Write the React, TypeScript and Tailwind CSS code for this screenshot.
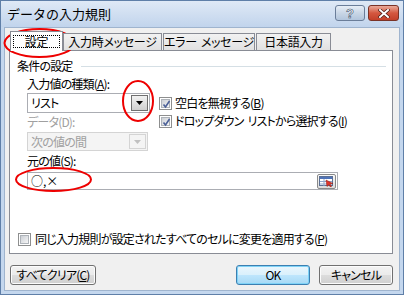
import React from "react";

const font = { fontFamily: '"Noto Sans CJK JP", "Liberation Sans", sans-serif' };

function Check({ checked }: { checked: boolean }) {
  return (
    <div className="w-[13px] h-[13px] border border-[#8e8f8f] bg-white p-[1px] shrink-0">
      <div className="w-full h-full bg-gradient-to-br from-[#cbcfd5] to-[#f6f6f6] border border-[#aeb3b9] relative">
        {checked && (
          <svg width="9" height="9" viewBox="0 0 9 9" className="absolute left-0 top-0">
            <path d="M1.5 4.5 L3.5 7 L7.5 1" stroke="#4a5f97" strokeWidth="1.6" fill="none" />
          </svg>
        )}
      </div>
    </div>
  );
}

function DropBtn({ disabled }: { disabled?: boolean }) {
  return (
    <div
      className={
        "w-[17px] h-full border flex items-center justify-center " +
        (disabled
          ? "border-[#d4d4d4] bg-[#f4f4f4]"
          : "border-[#707070] bg-gradient-to-b from-[#f2f2f2] to-[#cfcfcf]")
      }
    >
      <svg width="7" height="4" viewBox="0 0 7 4">
        <path d="M0 0 H7 L3.5 4 Z" fill={disabled ? "#c0c0c0" : "#000"} />
      </svg>
    </div>
  );
}

function Btn({ children, w, def }: { children: React.ReactNode; w: string; def?: boolean }) {
  return (
    <div
      className={
        "h-[20px] rounded-[3px] border flex items-center justify-center text-[12px] text-black whitespace-nowrap " +
        w +
        (def ? " border-[#3c7fb1] shadow-[inset_0_0_0_1px_#7fd3f7]" : " border-[#707070] shadow-[inset_0_0_0_1px_#fcfcfc]")
      }
      style={{
        background: def
          ? "linear-gradient(to bottom,#eaf6fd 0%,#d9f0fc 50%,#bee6fd 50%,#a7d9f5 100%)"
          : "linear-gradient(to bottom,#f2f2f2 0%,#ebebeb 50%,#dddddd 50%,#cfcfcf 100%)",
      }}
    >
      {children}
    </div>
  );
}

export default function App() {
  return (
    <div
      className="relative w-[404px] h-[295px] border border-[#5f7fa8] bg-[#c4d7ee] flex flex-col text-[12px] leading-[14px] text-black tracking-[-0.8px] [font-feature-settings:'palt']"
      style={font}
    >
      {/* title bar */}
      <div className="h-[26px] flex items-center pl-[6px] pr-[4px] bg-gradient-to-b from-[#dfe9f6] to-[#c1d4ec]">
        <div className="text-[13px] text-black flex-1 pb-[1px] tracking-normal [font-feature-settings:normal]">データの入力規則</div>
        <div className="flex gap-[3px] self-start mt-[4px]">
          <div className="w-[30px] h-[16px] rounded-[3px] border border-[#6a7d99] bg-gradient-to-b from-[#e7eef7] via-[#c9d6e6] to-[#b2c5dc] flex items-center justify-center">
            <span className="text-[13px] font-bold text-white leading-none tracking-normal" style={{ fontFamily: '"Liberation Sans", sans-serif', WebkitTextStroke: "0.6px #3a4d6a" }}>?</span>
          </div>
          <div className="w-[31px] h-[16px] rounded-[3px] border border-[#7a3226] bg-gradient-to-b from-[#e8a999] via-[#d4573f] to-[#c34029] flex items-center justify-center">
            <svg width="12" height="9" viewBox="0 0 12 9">
              <path d="M2 1 L10 8 M10 1 L2 8" stroke="#4a1a12" strokeWidth="3.4" strokeLinecap="square" />
              <path d="M2 1 L10 8 M10 1 L2 8" stroke="#ffffff" strokeWidth="2" strokeLinecap="square" />
            </svg>
          </div>
        </div>
      </div>

      {/* client */}
      <div className="flex-1 mx-[3px] mb-[3px] border border-[#9fb4ce] bg-[#f0f0f0] pl-[4px] pr-[6px] pt-[3px] flex flex-col">
        {/* tabs */}
        <div className="h-[19px] flex items-end relative z-10 whitespace-nowrap tracking-[-0.3px]">
          <div className="ml-[1px] w-[53px] h-[20px] -mb-[1px] border border-b-0 border-[#898c95] bg-white flex items-start justify-center pt-[3px]">
            <div className="border border-dotted border-black w-[47px] h-[13px] flex items-center justify-center">設定</div>
          </div>
          <div className="w-[99px] h-[17px] border border-b-0 border-[#898c95] bg-gradient-to-b from-[#f2f2f2] to-[#e1e1e1] flex items-center justify-center">入力時メッセージ</div>
          <div className="ml-[1px] w-[92px] h-[17px] border border-b-0 border-[#898c95] bg-gradient-to-b from-[#f2f2f2] to-[#e1e1e1] flex items-center justify-center">
            エラー<span className="ml-[4px]">メッセージ</span>
          </div>
          <div className="ml-[1px] w-[75px] h-[17px] border border-b-0 border-[#898c95] bg-gradient-to-b from-[#f2f2f2] to-[#e1e1e1] flex items-center justify-center">日本語入力</div>
        </div>

        {/* panel */}
        <div className="h-[204px] border border-[#898c95] bg-white flex flex-col whitespace-nowrap">
          <div className="flex items-center pt-[8px] pl-[7px] pr-[6px]">
            <span>条件の設定</span>
            <div className="flex-1 h-px bg-[#d5dfe5] ml-[8px]" />
          </div>

          <div className="pl-[17px] mt-[4px] flex">
            <div className="flex flex-col w-[123px]">
              <div>入力値の種類(<span className="underline">A</span>):</div>
              <div className="mt-[2px] h-[20px] border border-[#abadb3] bg-white flex items-center pl-[3px] pr-[1px] py-[1px]">
                <span className="flex-1">リスト</span>
                <DropBtn />
              </div>
              <div className="mt-[2px] text-[#a0a0a0]">データ(D):</div>
              <div className="mt-[3px] w-[121px] h-[19px] border border-[#d4d4d4] bg-[#f4f4f4] flex items-center pl-[3px] pr-[1px] py-[1px] text-[#a0a0a0]">
                <span className="flex-1">次の値の間</span>
                <DropBtn disabled />
              </div>
            </div>
            <div className="ml-[9px] pt-[19px] flex flex-col gap-[4px]">
              <div className="flex items-center gap-[3px]">
                <Check checked />
                <span>空白を無視する(<span className="underline">B</span>)</span>
              </div>
              <div className="flex items-center gap-[3px]">
                <Check checked />
                <span>
                  ドロップダウン<span className="ml-[4px]">リストから選択する(<span className="underline">I</span>)</span>
                </span>
              </div>
            </div>
          </div>

          <div className="pl-[17px] mt-[3px]">元の値(S):</div>
          <div className="ml-[17px] mt-[4px] w-[311px] h-[18px] border border-[#abadb3] bg-white flex items-center pl-[3px] pr-[1px]">
            <span className="flex-1 tracking-normal">○,×</span>
            <div className="w-[19px] h-[15px] border border-[#8a8a8a] rounded-[2px] bg-gradient-to-b from-[#fafafa] to-[#dcdcdc] flex items-center justify-center">
              <svg width="15" height="11" viewBox="0 0 15 11">
                <rect x="0.5" y="0.5" width="13" height="9" fill="#ffffff" stroke="#5b6f93" />
                <rect x="1" y="1" width="12" height="2" fill="#4f73b8" />
                <path d="M1 5.5 H13 M1 8 H13 M5 3 V10" stroke="#8fa6cc" strokeWidth="1" />
                <path d="M7 4 L14 7.5 L11 8 L12.5 10.5 L11.3 11 L10 8.6 L8 10.5 Z" fill="#e0342a" stroke="#8a1a10" strokeWidth="0.5" />
              </svg>
            </div>
          </div>

          <div className="mt-auto pb-[7px] pl-[8px] flex items-center gap-[4px]">
            <Check checked={false} />
            <span>同じ入力規則が設定されたすべてのセルに変更を適用する(<span className="underline">P</span>)</span>
          </div>
        </div>

        {/* buttons */}
        <div className="mt-[11px] flex items-center pl-[1px]">
          <Btn w="w-[86px]">すべてクリア(<span className="underline">C</span>)</Btn>
          <div className="flex-1" />
          <Btn w="w-[74px]" def>OK</Btn>
          <div className="w-[9px]" />
          <Btn w="w-[74px]">キャンセル</Btn>
        </div>
      </div>

      {/* red annotation ellipses */}
      <svg className="absolute left-0 top-0 pointer-events-none" width="404" height="295" viewBox="0 0 404 295">
        <ellipse cx="38.5" cy="42" rx="35" ry="14" fill="none" stroke="#ee0000" strokeWidth="2" />
        <ellipse cx="137" cy="100" rx="15" ry="20" fill="none" stroke="#ee0000" strokeWidth="2" />
        <ellipse cx="52.5" cy="178.5" rx="37.5" ry="11.5" fill="none" stroke="#ee0000" strokeWidth="2" />
      </svg>
    </div>
  );
}
